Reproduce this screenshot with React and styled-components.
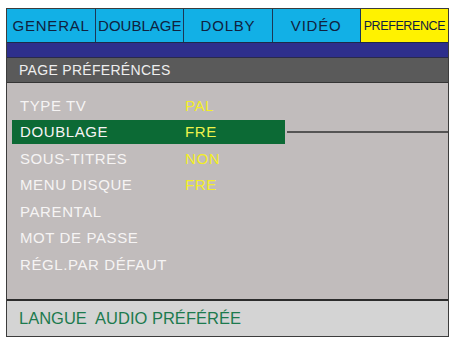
import React from 'react';
import styled, { createGlobalStyle } from 'styled-components';

const GlobalStyle = createGlobalStyle`
  body {
    margin: 0;
    background: #ffffff;
    font-family: "Liberation Sans", Arial, sans-serif;
  }
`;

const Frame = styled.div`
  box-sizing: border-box;
  width: 443px;
  margin: 8px 0 0 6px;
  border: 1px solid #3c3c3c;
  background: #c1bcbc;
`;

const TabBar = styled.div`
  display: grid;
  grid-template-columns: repeat(5, 1fr);
  height: 33px;
  border-bottom: 1px solid #1e2a48;
`;

const Tab = styled.div`
  display: flex;
  align-items: center;
  justify-content: center;
  background: ${(p) => (p.active ? '#fff200' : '#12b0e6')};
  border-left: ${(p) => (p.first ? 'none' : '1px solid #1c3656')};
  color: #10223f;
  font-size: ${(p) => (p.small ? '12.5px' : '15px')};
  letter-spacing: ${(p) => (p.small ? '-0.4px' : p.tight ? '0' : '0.8px')};
  white-space: nowrap;
  overflow: hidden;
`;

const Band = styled.div`
  height: 14px;
  background: #2e2f8c;
  border-bottom: 1px solid #2a2a4a;
`;

const PageHeader = styled.div`
  display: flex;
  align-items: center;
  height: 24px;
  padding-left: 12px;
  background: #5a5a5a;
  border-bottom: 1px solid #353535;
  color: #eeeeee;
  font-size: 14px;
  letter-spacing: 0.3px;
`;

const Content = styled.div`
  height: 207px;
  padding: 9px 0 0 5px;
`;

const Row = styled.div`
  display: flex;
  align-items: center;
  height: 26.5px;
`;

const Item = styled.div`
  display: flex;
  align-items: center;
  width: 273px;
  height: 24px;
  padding-left: 8px;
  box-sizing: border-box;
  background: ${(p) => (p.selected ? '#0c6a35' : 'transparent')};
  font-size: 15px;
  letter-spacing: 0.6px;
`;

const Label = styled.span`
  width: 165px;
  color: #f6f4f4;
`;

const Value = styled.span`
  color: ${(p) => (p.selected ? '#eef34c' : '#f3ee28')};
`;

const Connector = styled.div`
  flex: 1;
  height: 2px;
  margin-left: 2px;
  background: #555454;
`;

const Footer = styled.div`
  display: flex;
  align-items: center;
  height: 35px;
  padding-left: 12px;
  background: #d4d4d4;
  border-top: 2px solid #2c2c2c;
  color: #1c7a4e;
  font-size: 16.5px;
  white-space: pre;
`;

const tabs = [
  { name: 'GENERAL' },
  { name: 'DOUBLAGE', tight: true },
  { name: 'DOLBY' },
  { name: 'VIDÉO' },
  { name: 'PREFERENCE', active: true, small: true },
];

const rows = [
  { label: 'TYPE TV', value: 'PAL' },
  { label: 'DOUBLAGE', value: 'FRE', selected: true },
  { label: 'SOUS-TITRES', value: 'NON' },
  { label: 'MENU DISQUE', value: 'FRE' },
  { label: 'PARENTAL' },
  { label: 'MOT DE PASSE' },
  { label: 'RÉGL.PAR DÉFAUT' },
];

function App() {
  return (
    <>
      <GlobalStyle />
      <Frame>
        <TabBar>
          {tabs.map((t, i) => (
            <Tab key={t.name} first={i === 0} active={t.active} small={t.small} tight={t.tight}>
              {t.name}
            </Tab>
          ))}
        </TabBar>
        <Band />
        <PageHeader>PAGE PRÉFERÉNCES</PageHeader>
        <Content>
          {rows.map((r) => (
            <Row key={r.label}>
              <Item selected={r.selected}>
                <Label>{r.label}</Label>
                {r.value && <Value selected={r.selected}>{r.value}</Value>}
              </Item>
              {r.selected && <Connector />}
            </Row>
          ))}
        </Content>
        <Footer>LANGUE  AUDIO PRÉFÉRÉE</Footer>
      </Frame>
    </>
  );
}

export default App;
